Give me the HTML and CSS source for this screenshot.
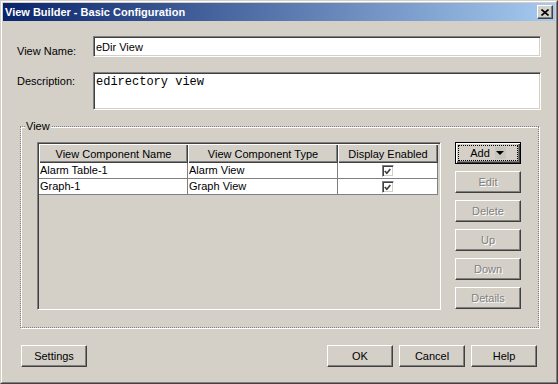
FILE: index.html
```html
<!DOCTYPE html>
<html lang="en">
<head>
    <meta charset="UTF-8">
    <title>View Builder - Basic Configuration</title>
    <link rel="stylesheet" href="styles.css">
</head>
<body>
    <div class="window">
        <div class="frame">
            <div class="titlebar">
                <span class="title">View Builder - Basic Configuration</span>
                <button class="close">
                    <svg width="8" height="7" viewBox="0 0 8 7"><path d="M0.5 0.5 L7.5 6.5 M7.5 0.5 L0.5 6.5" stroke="#000" stroke-width="1.6" fill="none"/></svg>
                </button>
            </div>

            <div class="form">
                <label class="lbl lbl-name">View Name:</label>
                <div class="field">eDir View</div>
                <label class="lbl lbl-desc">Description:</label>
                <div class="field area">edirectory view</div>
            </div>

            <fieldset class="group">
                <legend>View</legend>
                <div class="group-body">
                    <div class="table-pane">
                        <table>
                            <thead>
                                <tr>
                                    <th class="c1">View Component Name</th>
                                    <th class="c2">View Component Type</th>
                                    <th class="c3">Display Enabled</th>
                                </tr>
                            </thead>
                            <tbody>
                                <tr>
                                    <td>Alarm Table-1</td>
                                    <td>Alarm View</td>
                                    <td class="check-cell"><span class="check"><svg width="7" height="7" viewBox="0 0 7 7"><path d="M0.8 3 L2.8 5.2 L6.4 1" stroke="#404040" stroke-width="1.7" fill="none"/></svg></span></td>
                                </tr>
                                <tr>
                                    <td>Graph-1</td>
                                    <td>Graph View</td>
                                    <td class="check-cell"><span class="check"><svg width="7" height="7" viewBox="0 0 7 7"><path d="M0.8 3 L2.8 5.2 L6.4 1" stroke="#404040" stroke-width="1.7" fill="none"/></svg></span></td>
                                </tr>
                            </tbody>
                        </table>
                    </div>
                    <div class="side-buttons">
                        <button class="btn btn-default"><span class="focus">Add <span class="arrow"></span></span></button>
                        <button class="btn" disabled>Edit</button>
                        <button class="btn" disabled>Delete</button>
                        <button class="btn" disabled>Up</button>
                        <button class="btn" disabled>Down</button>
                        <button class="btn" disabled>Details</button>
                    </div>
                </div>
            </fieldset>

            <div class="footer">
                <button class="btn">Settings</button>
                <div class="footer-right">
                    <button class="btn">OK</button>
                    <button class="btn">Cancel</button>
                    <button class="btn">Help</button>
                </div>
            </div>
        </div>
    </div>
</body>
</html>
```

FILE: styles.css
```css
body {
    margin: 0;
    background: #d4d0c8;
    font-family: "Liberation Sans", Arial, sans-serif;
    font-size: 11px;
    color: #000;
}
.window {
    width: 558px;
    height: 384px;
    box-sizing: border-box;
    border: 1px solid;
    border-color: #d4d0c8 #404040 #404040 #d4d0c8;
    background: #d4d0c8;
}
.frame {
    height: 100%;
    box-sizing: border-box;
    border: 1px solid;
    border-color: #fff #808080 #808080 #fff;
    padding: 1px;
}
.titlebar {
    height: 18px;
    display: flex;
    align-items: center;
    justify-content: space-between;
    padding: 0 2px;
    background: linear-gradient(to right, #0a246a, #a6caf0);
}
.title {
    color: #fff;
    font-weight: bold;
    font-size: 11px;
}
.close {
    width: 16px;
    height: 14px;
    padding: 0;
    display: flex;
    align-items: center;
    justify-content: center;
    background: #d4d0c8;
    border: 1px solid;
    border-color: #fff #404040 #404040 #fff;
    box-shadow: inset -1px -1px #808080;
}

/* name / description */
.form {
    display: grid;
    grid-template-columns: 76px 448px;
    row-gap: 14px;
    padding: 15px 0 0 14px;
}
.lbl {
    line-height: 14px;
}
.lbl-name {
    padding-top: 8px;
}
.lbl-desc {
    padding-top: 2px;
}
.field {
    height: 21px;
    box-sizing: border-box;
    background: #fff;
    border: 1px solid;
    border-color: #808080 #fff #fff #808080;
    box-shadow: inset 1px 1px #404040, inset -1px -1px #d4d0c8;
    padding: 3px 2px 0;
    line-height: 14px;
}
.area {
    height: 38px;
    padding: 2px 2px 0;
    font-family: "Liberation Mono", "Courier New", monospace;
    font-size: 12px;
}

/* view group */
.group {
    width: 519px;
    box-sizing: border-box;
    margin: 9px 0 0 17px;
    padding: 0;
    border: 1px dotted #808080;
    box-shadow: 1px 1px 0 #fff, inset 1px 1px 0 #fff;
}
.group legend {
    margin-left: 4px;
    padding: 0 1px;
    line-height: 14px;
    background: #d4d0c8;
}
.group-body {
    display: flex;
    padding: 9px 0 17px 16px;
}
.table-pane {
    width: 404px;
    height: 168px;
    box-sizing: border-box;
    border: 1px solid;
    border-color: #808080 #fff #fff #808080;
    box-shadow: inset 1px 1px #404040, inset -1px -1px #d4d0c8;
    padding: 1px;
}
table {
    border-collapse: separate;
    border-spacing: 0;
    table-layout: fixed;
    width: 399px;
}
th {
    height: 19px;
    padding: 0;
    font-weight: normal;
    text-align: center;
    background: #d4d0c8;
    box-shadow: inset 1px 1px #fff, inset -1px -1px #404040, inset -2px -2px #808080;
}
.c1 { width: 149px; }
.c2 { width: 150px; }
.c3 { width: 100px; }
td {
    height: 15px;
    padding: 0 0 0 1px;
    background: #fff;
    border-right: 1px solid #808080;
    border-bottom: 1px solid #808080;
    white-space: nowrap;
    line-height: 15px;
}
.check-cell {
    text-align: center;
    padding: 0;
}
.check {
    display: inline-flex;
    align-items: center;
    justify-content: center;
    width: 12px;
    height: 12px;
    box-sizing: border-box;
    vertical-align: middle;
    background: #fff;
    border: 1px solid;
    border-color: #808080 #fff #fff #808080;
    box-shadow: inset 1px 1px #404040, inset -1px -1px #d4d0c8;
}

/* buttons */
.side-buttons {
    display: flex;
    flex-direction: column;
    gap: 7px;
    margin-left: 14px;
}
.btn {
    width: 66px;
    height: 22px;
    padding: 0;
    font-family: "Liberation Sans", Arial, sans-serif;
    font-size: 11px;
    color: #000;
    background: #d4d0c8;
    border: 1px solid;
    border-color: #fff #404040 #404040 #fff;
    box-shadow: inset -1px -1px #808080;
}
.btn:disabled {
    color: #808080;
    text-shadow: 1px 1px 0 #fff;
}
.btn-default {
    border-color: #000;
    box-shadow: inset 1px 1px #fff, inset -1px -1px #404040, inset -2px -2px #808080;
    padding: 2px;
}
.focus {
    display: flex;
    align-items: center;
    justify-content: center;
    gap: 5px;
    height: 100%;
    box-sizing: border-box;
    border: 1px dotted #000;
}
.arrow {
    width: 11px;
    height: 12px;
    background: #c8c5bd;
    display: flex;
    align-items: center;
    justify-content: center;
}
.arrow::after {
    content: "";
    border-left: 4px solid transparent;
    border-right: 4px solid transparent;
    border-top: 4px solid #000;
}
.footer {
    display: flex;
    justify-content: space-between;
    padding: 0 18px;
    margin-top: 17px;
}
.footer-right {
    display: flex;
    gap: 6px;
}
```
